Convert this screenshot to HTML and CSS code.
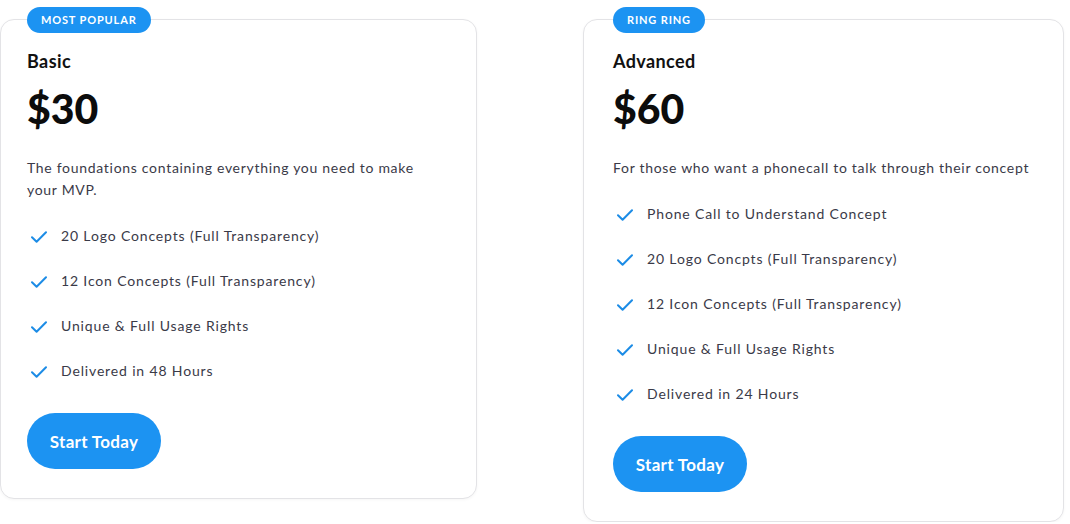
FILE: index.html
```html
<!DOCTYPE html>
<html lang="en">
<head>
<meta charset="utf-8">
<title>Pricing</title>
<link rel="stylesheet" href="styles.css">
</head>
<body>
<div class="pricing">
  <div class="card card-basic">
    <span class="badge">MOST POPULAR</span>
    <h3 class="plan">Basic</h3>
    <div class="price">$30</div>
    <p class="desc">The foundations containing everything you need to make your MVP.</p>
    <ul class="features">
      <li><svg class="check" viewBox="0 0 16 12"><path d="M1 6.2 L5.6 10.8 L15 1.2"/></svg>20 Logo Concepts (Full Transparency)</li>
      <li><svg class="check" viewBox="0 0 16 12"><path d="M1 6.2 L5.6 10.8 L15 1.2"/></svg>12 Icon Concepts (Full Transparency)</li>
      <li><svg class="check" viewBox="0 0 16 12"><path d="M1 6.2 L5.6 10.8 L15 1.2"/></svg>Unique &amp; Full Usage Rights</li>
      <li><svg class="check" viewBox="0 0 16 12"><path d="M1 6.2 L5.6 10.8 L15 1.2"/></svg>Delivered in 48 Hours</li>
    </ul>
    <a class="btn" href="#">Start Today</a>
  </div>
  <div class="card card-advanced">
    <span class="badge">RING RING</span>
    <h3 class="plan">Advanced</h3>
    <div class="price">$60</div>
    <p class="desc">For those who want a phonecall to talk through their concept</p>
    <ul class="features">
      <li><svg class="check" viewBox="0 0 16 12"><path d="M1 6.2 L5.6 10.8 L15 1.2"/></svg>Phone Call to Understand Concept</li>
      <li><svg class="check" viewBox="0 0 16 12"><path d="M1 6.2 L5.6 10.8 L15 1.2"/></svg>20 Logo Concpts (Full Transparency)</li>
      <li><svg class="check" viewBox="0 0 16 12"><path d="M1 6.2 L5.6 10.8 L15 1.2"/></svg>12 Icon Concepts (Full Transparency)</li>
      <li><svg class="check" viewBox="0 0 16 12"><path d="M1 6.2 L5.6 10.8 L15 1.2"/></svg>Unique &amp; Full Usage Rights</li>
      <li><svg class="check" viewBox="0 0 16 12"><path d="M1 6.2 L5.6 10.8 L15 1.2"/></svg>Delivered in 24 Hours</li>
    </ul>
    <a class="btn" href="#">Start Today</a>
  </div>
</div>
</body>
</html>
```
FILE: styles.css
```css
* { box-sizing: border-box; }
html, body {
  margin: 0;
  padding: 0;
  background: #ffffff;
  font-family: "Lato", "Open Sans", sans-serif;
  color: #1a1a1a;
}
.pricing {
  display: flex;
  align-items: flex-start;
  gap: 106px;
  padding-top: 19px;
}
.card {
  position: relative;
  border: 1px solid #e3e3e6;
  border-radius: 14px;
  padding: 29px 26px 29px 26px;
  background: #fff;
  box-shadow: 0 1px 3px rgba(0,0,0,0.04);
  display: flex;
  flex-direction: column;
  align-items: flex-start;
}
.card-basic { width: 477px; }
.card-advanced { width: 481px; padding-left: 29px; }
.badge {
  position: absolute;
  top: -13px;
  left: 26px;
  height: 26px;
  padding: 0 14px;
  border-radius: 13px;
  background: #1c93f2;
  color: #fff;
  font-size: 11px;
  font-weight: 700;
  letter-spacing: 0.85px;
  line-height: 26px;
}
.card-advanced .badge { left: 29px; }
.plan {
  margin: 0;
  font-size: 18px;
  font-weight: 700;
  line-height: 24px;
  color: #111;
  letter-spacing: 0.4px;
}
.price {
  margin-top: 12px;
  font-size: 41px;
  font-weight: 900;
  line-height: 48px;
  color: #0c0c0c;
}
.desc {
  margin: 24px 0 0 0;
  max-width: 420px;
  font-size: 14px;
  line-height: 22px;
  color: #3a3a48;
  letter-spacing: 0.7px;
}
.features {
  list-style: none;
  margin: 12px 0 0 0;
  padding: 0;
}
.features li {
  display: flex;
  align-items: center;
  height: 45px;
  font-size: 14px;
  color: #3a3a48;
  letter-spacing: 0.85px;
}
.check {
  width: 16px;
  height: 12px;
  margin: 2px 14px 0 4px;
  flex: none;
  fill: none;
  stroke: #1c8ce6;
  stroke-width: 2;
  stroke-linecap: round;
  stroke-linejoin: round;
}
.btn {
  margin-top: 20px;
  display: inline-flex;
  align-items: center;
  justify-content: center;
  height: 56px;
  width: 134px;
  border-radius: 28px;
  background: #1c93f2;
  color: #fff;
  font-size: 17px;
  font-weight: 700;
  text-decoration: none;
  letter-spacing: 0.3px;
}
```
